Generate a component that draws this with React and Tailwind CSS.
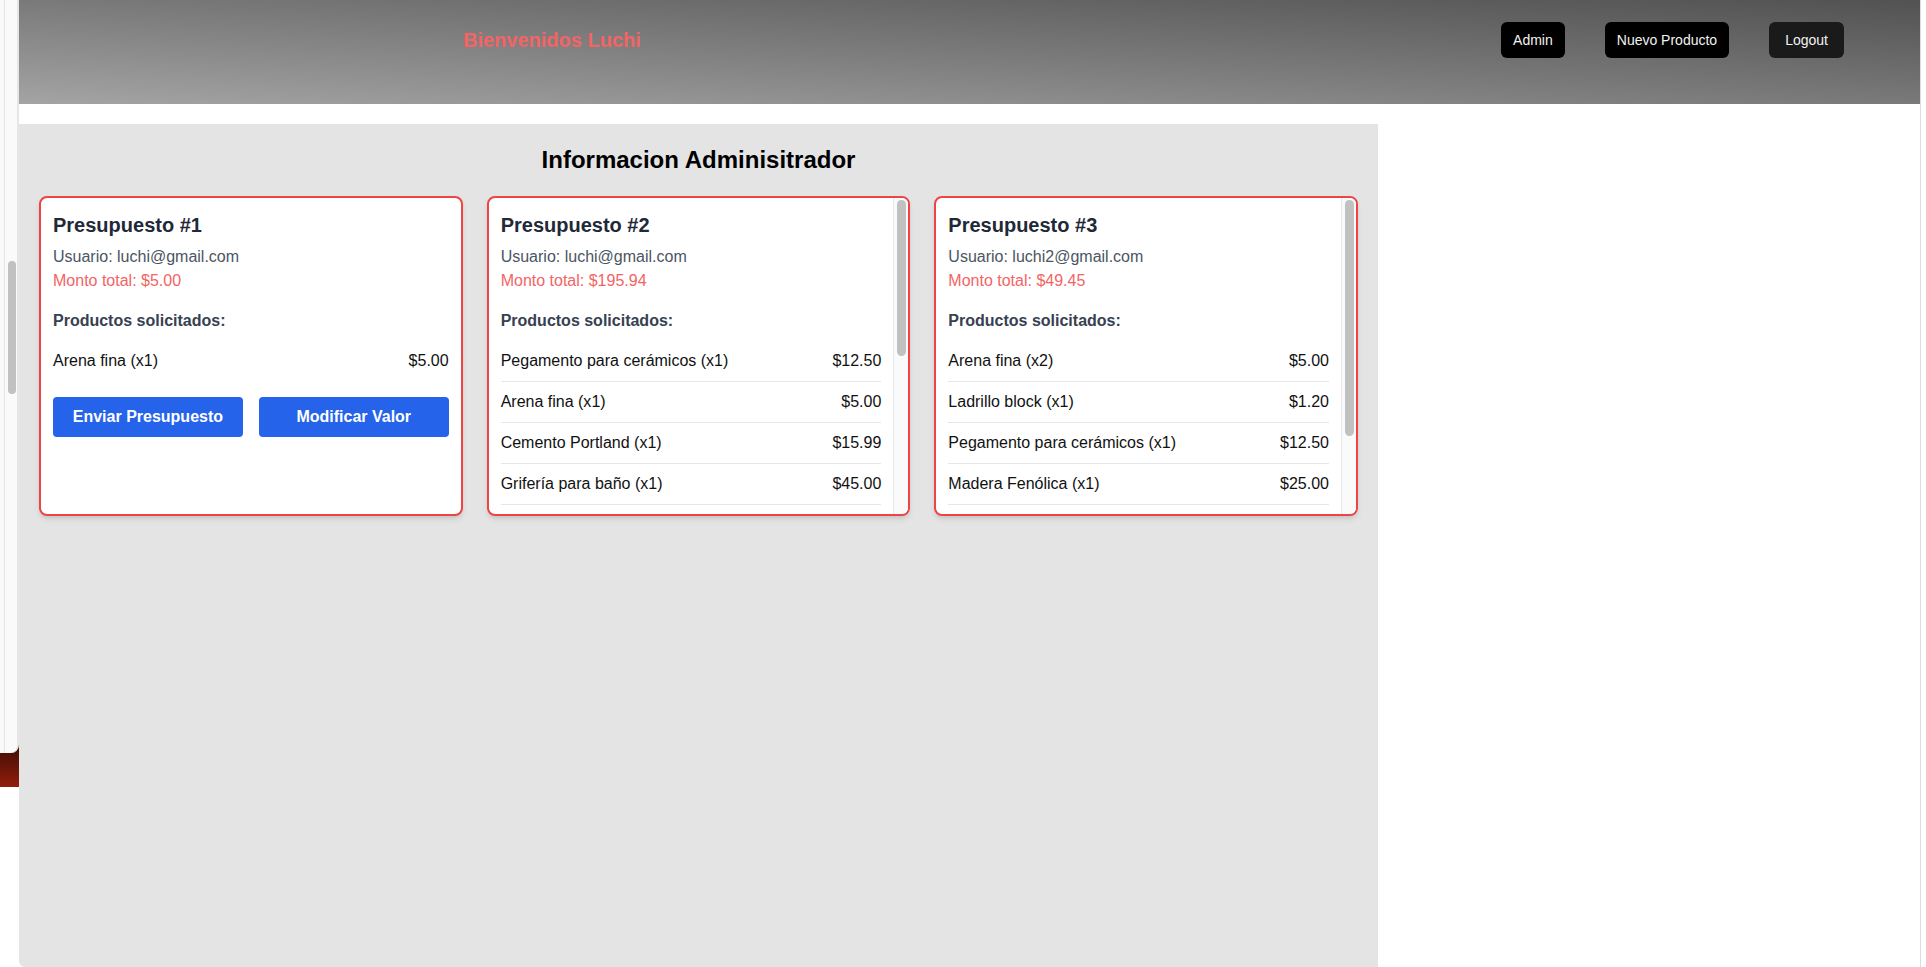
import React from 'react';

const PRESUPUESTOS = [
  {
    id: 1,
    usuario: 'luchi@gmail.com',
    total: '$5.00',
    productos: [{ nombre: 'Arena fina', cantidad: 1, precio: '$5.00' }],
  },
  {
    id: 2,
    usuario: 'luchi@gmail.com',
    total: '$195.94',
    thumb: 156,
    productos: [
      { nombre: 'Pegamento para cerámicos', cantidad: 1, precio: '$12.50' },
      { nombre: 'Arena fina', cantidad: 1, precio: '$5.00' },
      { nombre: 'Cemento Portland', cantidad: 1, precio: '$15.99' },
      { nombre: 'Grifería para baño', cantidad: 1, precio: '$45.00' },
      { nombre: 'Ladrillo block', cantidad: 1, precio: '$1.20' },
      { nombre: 'Madera Fenólica', cantidad: 1, precio: '$25.00' },
      { nombre: 'Pintura látex', cantidad: 1, precio: '$32.50' },
      { nombre: 'Cable eléctrico', cantidad: 1, precio: '$18.75' },
      { nombre: 'Caño PVC', cantidad: 1, precio: '$9.50' },
      { nombre: 'Llave de paso', cantidad: 1, precio: '$30.50' },
    ],
  },
  {
    id: 3,
    usuario: 'luchi2@gmail.com',
    total: '$49.45',
    thumb: 236,
    productos: [
      { nombre: 'Arena fina', cantidad: 2, precio: '$5.00' },
      { nombre: 'Ladrillo block', cantidad: 1, precio: '$1.20' },
      { nombre: 'Pegamento para cerámicos', cantidad: 1, precio: '$12.50' },
      { nombre: 'Madera Fenólica', cantidad: 1, precio: '$25.00' },
      { nombre: 'Tornillos', cantidad: 1, precio: '$0.75' },
    ],
  },
];

function PresupuestoCard({ p }) {
  return (
    <div className="h-[320px] flex overflow-hidden bg-white border-2 border-[#ef4444] rounded-lg shadow-md">
      <div className="flex-1 min-w-0 overflow-hidden px-3 pt-[13px] pb-3">
        <h2 className="text-xl font-bold text-[#1f2937] mb-1.5">Presupuesto #{p.id}</h2>
        <p className="text-base text-[#4b5563]">Usuario: {p.usuario}</p>
        <p className="text-base text-[#f36464]">Monto total: {p.total}</p>
        <h3 className="mt-4 mb-2 text-base font-bold text-[#374151]">Productos solicitados:</h3>
        <ul>
          {p.productos.map((prod, i) => (
            <li
              key={i}
              className="flex justify-between py-2 border-b border-[#e5e7eb] last:border-b-0 text-base text-[#111]"
            >
              <span>
                {prod.nombre} (x{prod.cantidad})
              </span>
              <span>{prod.precio}</span>
            </li>
          ))}
        </ul>
        <div className="mt-4 flex gap-4">
          <button className="flex-1 h-10 rounded bg-[#2563eb] text-white font-bold text-base">
            Enviar Presupuesto
          </button>
          <button className="flex-1 h-10 rounded bg-[#2563eb] text-white font-bold text-base">
            Modificar Valor
          </button>
        </div>
      </div>
      {p.thumb && (
        <div className="w-[15px] shrink-0 bg-[#fafafa] border-l border-[#e8e8e8] pt-[2px] pl-[3px] pr-[2px]">
          <div className="w-full rounded-full bg-[#c1c1c1]" style={{ height: p.thumb }} />
        </div>
      )}
    </div>
  );
}

export default function App() {
  return (
    <div className="flex w-[1926px] h-[967px] overflow-hidden bg-white font-['Liberation_Sans',Arial,sans-serif]">
      {/* Ventana de atrás (borde izquierdo) */}
      <div className="w-[19px] shrink-0 flex flex-col">
        <div className="relative z-10 h-[753px] rounded-br-[8px] bg-[#fafafa] border-r-2 border-[#e6e6e6] pl-[4px]">
          <div className="h-full border-l border-[#e4e4e4] pt-[31px] pl-[3px]">
            <div className="w-[8px] h-[133px] mt-[230px] rounded-full bg-[#c1c1c1]" />
          </div>
        </div>
        <div className="h-[42px] -mt-[8px] bg-linear-to-b from-[#3e0c06] to-[#931d0b]" />
      </div>

      <div className="w-[1902px] shrink-0 flex flex-col border-r border-[#dcdcdc]">
        {/* Header */}
        <header className="h-[104px] shrink-0 flex items-start bg-linear-to-tr from-[#a4a4a4] to-[#525252]">
          <h1 className="ml-[444px] mt-[26px] text-xl font-bold text-[#f36464]">Bienvenidos Luchi</h1>
          <nav className="ml-auto mr-[76px] mt-[22px] flex gap-10">
            <button className="px-3 py-2 rounded-md bg-black text-sm text-[#f2f2f2]">Admin</button>
            <button className="px-3 py-2 rounded-md bg-black text-sm text-[#f2f2f2]">Nuevo Producto</button>
            <button className="px-4 py-2 rounded-md bg-[#1a1a1a] text-sm text-[#f2f2f2]">Logout</button>
          </nav>
        </header>

        {/* Panel admin */}
        <div className="mt-5 flex-1">
          <section className="w-[1359px] h-full bg-[#e4e4e4] p-5 rounded-bl-[6px]">
            <h2 className="text-2xl font-bold text-black text-center mb-5">Informacion Adminisitrador</h2>
            <div className="grid grid-cols-3 gap-6">
              {PRESUPUESTOS.map((p) => (
                <PresupuestoCard key={p.id} p={p} />
              ))}
            </div>
          </section>
        </div>
      </div>
    </div>
  );
}
